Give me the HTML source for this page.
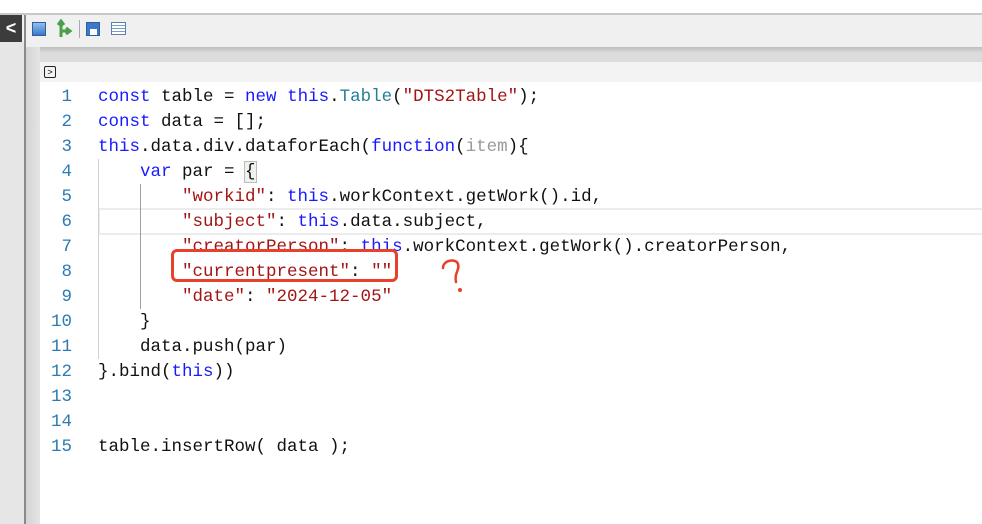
<!DOCTYPE html>
<html><head><meta charset="utf-8"><style>
*{margin:0;padding:0;box-sizing:border-box}
body{width:982px;height:524px;overflow:hidden;background:#fff;position:relative;font-family:"Liberation Mono",monospace}
.abs{position:absolute}
.code{font-size:17.5px;line-height:25px;white-space:pre;color:#111}
.k{color:#1a1aff}.t{color:#267f99}.s{color:#a31515}.p{color:#9a9a9a}
.ln{color:#2b7bb5;text-align:right;width:30px;left:42px}
</style></head><body>
<div class="abs" style="left:0;top:0;width:982px;height:13px;background:#fff"></div>
<div class="abs" style="left:0;top:13px;width:982px;height:2px;background:#c8c8c8"></div>
<div class="abs" style="left:0;top:15px;width:982px;height:32px;background:#f0f0f0"></div>
<div class="abs" style="left:0;top:15px;width:22px;height:27px;background:#3c3c3c;color:#fff;font:bold 18px 'Liberation Sans',sans-serif;text-align:center;line-height:27px">&lt;</div>
<div class="abs" style="left:0;top:42px;width:24px;height:482px;background:#e6e6e6"></div>
<div class="abs" style="left:24px;top:15px;width:2px;height:509px;background:#8a8a8a"></div>
<div class="abs" style="left:32px;top:22px;width:14px;height:14px;background:linear-gradient(#8fc0ee,#3a78c8);border:1px solid #2d5f9e"></div>
<svg class="abs" style="left:57px;top:19px" width="18" height="20"><path d="M4 2 L4 18 M1 6 L4 2 L7 6 M4 12 L12 12 M9 9 L13 12 L9 15" stroke="#4aa04a" stroke-width="3" fill="none"/></svg>
<div class="abs" style="left:79px;top:20px;width:1px;height:18px;background:#aaa"></div>
<div class="abs" style="left:86px;top:22px;width:14px;height:14px;background:#3a78c8;border:1px solid #2d5f9e"><div style="position:absolute;left:3px;top:6px;width:7px;height:6px;background:#fff"></div></div>
<div class="abs" style="left:111px;top:22px;width:15px;height:13px;background:#fff;border:1px solid #5a7fb0;background-image:repeating-linear-gradient(#fff 0 2px,#7a9cc8 2px 3px)"></div>
<div class="abs" style="left:26px;top:47px;width:956px;height:477px;background:linear-gradient(#bdbdbd,#dcdcdc 6px,#e6e6e6)"></div>
<div class="abs" style="left:26px;top:47px;width:14px;height:477px;background:linear-gradient(90deg,#d4d4d4,#e4e4e4)"></div>
<div class="abs" style="left:40px;top:62px;width:942px;height:462px;background:#fff"></div>
<div class="abs" style="left:40px;top:62px;width:942px;height:20px;background:#f3f3f3"></div>
<div class="abs" style="left:44px;top:66px;width:12px;height:12px;border:1px solid #222;border-radius:2px;font:9px 'Liberation Sans',sans-serif;line-height:10px;text-align:center">&gt;</div>
<div class="abs" style="left:98px;top:208px;width:884px;height:27px;border:2px solid #ececec;border-right:none"></div>
<div class="abs" style="left:98px;top:159px;width:1px;height:200px;background:#d0d0d0"></div>
<div class="abs" style="left:140px;top:184px;width:1px;height:125px;background:#a0a0a0"></div>
<div class="abs code ln" style="top:85px">1
2
3
4
5
6
7
8
9
10
11
12
13
14
15</div>
<div class="abs code" style="left:98px;top:85px"><span class="k">const</span> table = <span class="k">new</span> <span class="k">this</span>.<span class="t">Table</span>(<span class="s">"DTS2Table"</span>);
<span class="k">const</span> data = [];
<span class="k">this</span>.data.div.dataforEach(<span class="k">function</span>(<span class="p">item</span>){
    <span class="k">var</span> par = <span style="background:#eef3ee;outline:1px solid #bbb">{</span>
        <span class="s">"workid"</span>: <span class="k">this</span>.workContext.getWork().id,
        <span class="s">"subject"</span>: <span class="k">this</span>.data.subject,
        <span class="s">"creatorPerson"</span>: <span class="k">this</span>.workContext.getWork().creatorPerson,
        <span class="s">"currentpresent"</span>: <span class="s">""</span>,
        <span class="s">"date"</span>: <span class="s">"2024-12-05"</span>
    }
    data.push(par)
}.bind(<span class="k">this</span>))


table.insertRow( data );</div>
<div class="abs" style="left:171px;top:249px;width:227px;height:33px;border:3px solid #e8402a;border-radius:6px"></div>
<svg class="abs" style="left:438px;top:256px" width="36" height="40"><path d="M5 12 C5 4 18 2 20 8 C22 14 16 17 18 26" stroke="#e8402a" stroke-width="2.5" fill="none" stroke-linecap="round"/><circle cx="22" cy="34" r="2" fill="#e8402a"/></svg>
</body></html>
